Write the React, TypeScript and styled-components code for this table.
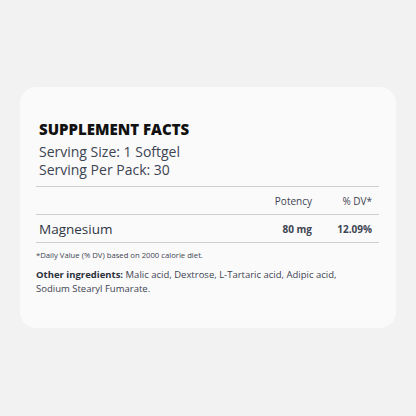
import React from "react";
import styled, { createGlobalStyle } from "styled-components";

const GlobalStyle = createGlobalStyle`
  html, body {
    margin: 0;
    padding: 0;
    background: #f2f2f2;
    font-family: "Open Sans", "Liberation Sans", sans-serif;
  }
`;

const Page = styled.div`
  width: 416px;
  height: 416px;
  padding: 87px 20px 0;
  box-sizing: border-box;
`;

const Card = styled.div`
  background: #fafafa;
  border-radius: 16px;
  height: 241px;
  box-sizing: border-box;
  padding: 33px 17px 0 16px;
`;

const Title = styled.h2`
  margin: 0 0 5px 3px;
  font-size: 15px;
  font-weight: 800;
  color: #111;
  line-height: 18px;
`;

const Serving = styled.div`
  margin-left: 3px;
  font-size: 14px;
  line-height: 18px;
  color: #3d4452;
`;

const Table = styled.div`
  margin-top: 7px;
`;

const Row = styled.div`
  display: grid;
  grid-template-columns: 1fr 76px 60px;
  align-items: center;
  height: 27px;
  border-top: 1px solid #cfcfcf;
  padding: 0 7px 0 3px;
  color: #3d4452;
  &:last-of-type {
    border-bottom: 1px solid #cfcfcf;
  }
`;

const Cell = styled.span<{ $bold?: boolean }>`
  font-size: 10px;
  font-weight: ${(p) => (p.$bold ? 700 : 400)};
  text-align: right;
`;

const Name = styled.span`
  font-size: 13.5px;
  color: #2f3644;
`;

const Note = styled.p`
  margin: 7px 0 0 0;
  font-size: 7.7px;
  color: #3d4452;
`;

const Ingredients = styled.p`
  margin: 8px 0 0 0;
  font-size: 9.5px;
  line-height: 14px;
  color: #3d4452;
  b {
    color: #2a303c;
  }
`;

export default function App() {
  return (
    <>
      <GlobalStyle />
      <Page>
        <Card>
          <Title>SUPPLEMENT FACTS</Title>
          <Serving>Serving Size: 1 Softgel</Serving>
          <Serving>Serving Per Pack: 30</Serving>
          <Table>
            <Row>
              <span />
              <Cell>Potency</Cell>
              <Cell>% DV*</Cell>
            </Row>
            <Row>
              <Name>Magnesium</Name>
              <Cell $bold>80 mg</Cell>
              <Cell $bold>12.09%</Cell>
            </Row>
          </Table>
          <Note>*Daily Value (% DV) based on 2000 calorie diet.</Note>
          <Ingredients>
            <b>Other ingredients:</b> Malic acid, Dextrose, L-Tartaric acid, Adipic acid,
            <br />
            Sodium Stearyl Fumarate.
          </Ingredients>
        </Card>
      </Page>
    </>
  );
}
